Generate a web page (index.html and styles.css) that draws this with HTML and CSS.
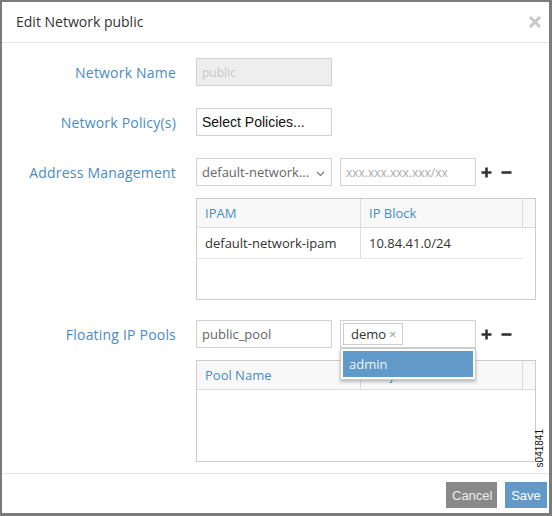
FILE: index.html
```html
<!DOCTYPE html>
<html>
<head>
<meta charset="utf-8">
<link rel="stylesheet" href="styles.css">
</head>
<body>
<div class="dialog">
  <div class="header">
    <span class="title">Edit Network public</span>
    <span class="close"><svg width="12" height="12" viewBox="0 0 12 12"><path d="M2 2L10 10M10 2L2 10" stroke="#c8c8c8" stroke-width="3" stroke-linecap="square"/></svg></span>
  </div>
  <div class="body">
    <div class="row">
      <div class="label">Network Name</div>
      <div class="controls"><div class="input disabled"><span class="ph">public</span></div></div>
    </div>
    <div class="row">
      <div class="label">Network Policy(s)</div>
      <div class="controls"><div class="input sans">Select Policies...</div></div>
    </div>
    <div class="row">
      <div class="label">Address Management</div>
      <div class="controls">
        <div class="input select"><span class="gray">default-network...</span><svg class="chev" width="9" height="6" viewBox="0 0 9 6"><path d="M1 1L4.5 4.5L8 1" fill="none" stroke="#777" stroke-width="1.1"/></svg></div>
        <div class="input"><span class="ph2">xxx.xxx.xxx.xxx/xx</span></div>
        <div class="pm">
          <svg width="11" height="11" viewBox="0 0 11 11"><path d="M5.5 0.5V10.5M0.5 5.5H10.5" stroke="#333" stroke-width="2.6"/></svg>
          <svg width="11" height="11" viewBox="0 0 11 11"><path d="M0.5 5.5H10.5" stroke="#333" stroke-width="2.6"/></svg>
        </div>
      </div>
    </div>
    <div class="row table-row">
      <div></div>
      <div class="grid">
        <div class="ghead">
          <div class="c1">IPAM</div>
          <div class="c2">IP Block</div>
          <div class="c3"></div>
        </div>
        <div class="grow">
          <div class="c1">default-network-ipam</div>
          <div class="c2">10.84.41.0/24</div>
        </div>
      </div>
    </div>
    <div class="row pools">
      <div class="label">Floating IP Pools</div>
      <div class="controls">
        <div class="input"><span class="gray">public_pool</span></div>
        <div class="multi">
          <div class="input tags"><span class="tag">demo <span class="x">×</span></span></div>
          <div class="menu"><div class="item">admin</div></div>
        </div>
        <div class="pm">
          <svg width="11" height="11" viewBox="0 0 11 11"><path d="M5.5 0.5V10.5M0.5 5.5H10.5" stroke="#333" stroke-width="2.6"/></svg>
          <svg width="11" height="11" viewBox="0 0 11 11"><path d="M0.5 5.5H10.5" stroke="#333" stroke-width="2.6"/></svg>
        </div>
      </div>
    </div>
    <div class="row table-row">
      <div></div>
      <div class="grid">
        <div class="ghead">
          <div class="c1">Pool Name</div>
          <div class="c2">Projects</div>
          <div class="c3"></div>
        </div>
      </div>
    </div>
  </div>
  <div class="footer">
    <button class="btn cancel">Cancel</button>
    <button class="btn save">Save</button>
  </div>
  <div class="figid">s041841</div>
</div>
</body>
</html>
```
FILE: styles.css
```css
* { box-sizing: border-box; }
html, body { margin: 0; padding: 0; background: #fff; }
body { font-family: "Open Sans", "Noto Sans", sans-serif; color: #333; }
.dialog {
  position: relative;
  width: 552px; height: 516px;
  border-style: solid; border-color: #7b7b7b;
  border-width: 2px 3px 3px 2px;
  display: flex; flex-direction: column;
  background: #fff;
}
.header {
  height: 41px;
  border-bottom: 1px solid #e5e5e5;
  display: flex; align-items: center; justify-content: space-between;
  padding: 0 8px 0 14px;
}
.title { font-size: 14px; color: #333; margin-top: -1px; }
.close { display: flex; }
.body {
  flex: 1;
  padding-top: 15px;
  display: flex; flex-direction: column;
}
.row { display: grid; grid-template-columns: 174px 340px; column-gap: 20px; align-items: center; }
.row + .row { margin-top: 22px; }
.row.table-row { margin-top: 12px; }
.row.pools { margin-top: 20px; }
.label { text-align: right; font-size: 14px; color: #4a8cc4; letter-spacing: 0.2px; }
.controls { display: flex; align-items: center; gap: 8px; }
.input {
  width: 136px; height: 28px;
  border: 1px solid #d0d0d0;
  display: flex; align-items: center;
  padding: 0 5px;
  font-size: 13px;
  background: #fff;
}
.input.disabled { background: #eee; }
.ph { color: #c9c9c9; font-size: 12px; }
.ph2 { color: #aaa; font-size: 12px; }
.gray { color: #666; }
.sans { font-family: "Liberation Sans", Arial, sans-serif; font-size: 14px; color: #111; }
.select { justify-content: space-between; padding-right: 6px; }
.chev { margin-top: 3px; }
.pm { display: flex; gap: 9px; margin-left: -3px; align-items: center; }
.grid {
  width: 340px; height: 102px;
  border: 1px solid #ccc;
  font-size: 13px;
}
.ghead { display: flex; height: 29px; background: #f8f8f8; border-bottom: 1px solid #ddd; }
.ghead > div { display: flex; align-items: center; padding-left: 8px; color: #4a8cc4; }
.c1 { width: 164px; border-right: 1px solid #ddd; }
.c2 { width: 162px; }
.ghead .c2 { border-right: 1px solid #ddd; }
.c3 { flex: 1; }
.grow { display: flex; height: 31px; width: 326px; border-bottom: 1px solid #e5e5e5; }
.grow > div { display: flex; align-items: center; padding-left: 8px; color: #333; }
.multi { position: relative; }
.tags { padding: 0 2px; }
.tag {
  border: 1px solid #ccc; height: 22px; display: flex; align-items: center;
  padding: 0 5px 0 7px; font-size: 13px; color: #333;
}
.tag .x { color: #999; font-size: 13px; margin-left: 3px; }
.menu {
  position: absolute; left: 0; top: 28px;
  width: 136px; height: 32px;
  background: #fff; border: 1px solid #ccc;
  box-shadow: 0 2px 3px rgba(0,0,0,0.25);
  padding: 2px;
  z-index: 2;
}
.item {
  background: #6199c9; color: #eef4fa; height: 26px;
  display: flex; align-items: center; padding-left: 6px; font-size: 13px;
}
.footer {
  height: 40px;
  border-top: 1px solid #e5e5e5;
  display: flex; justify-content: flex-end; align-items: flex-start;
  padding: 8px 2px 0 0; gap: 8px;
}
.btn {
  height: 26px; border: 0; margin: 0;
  font-family: "Liberation Sans", Arial, sans-serif; font-size: 13px;
  padding: 0 6px;
}
.cancel { background: #898989; color: #eee; width: 51px; }
.save { background: #6199c9; color: #fff; width: 42px; }
.figid {
  position: absolute; right: 4px; bottom: 46px;
  writing-mode: vertical-rl; transform: rotate(180deg);
  font-family: "Liberation Sans", Arial, sans-serif; font-size: 10px; color: #111;
}
```
